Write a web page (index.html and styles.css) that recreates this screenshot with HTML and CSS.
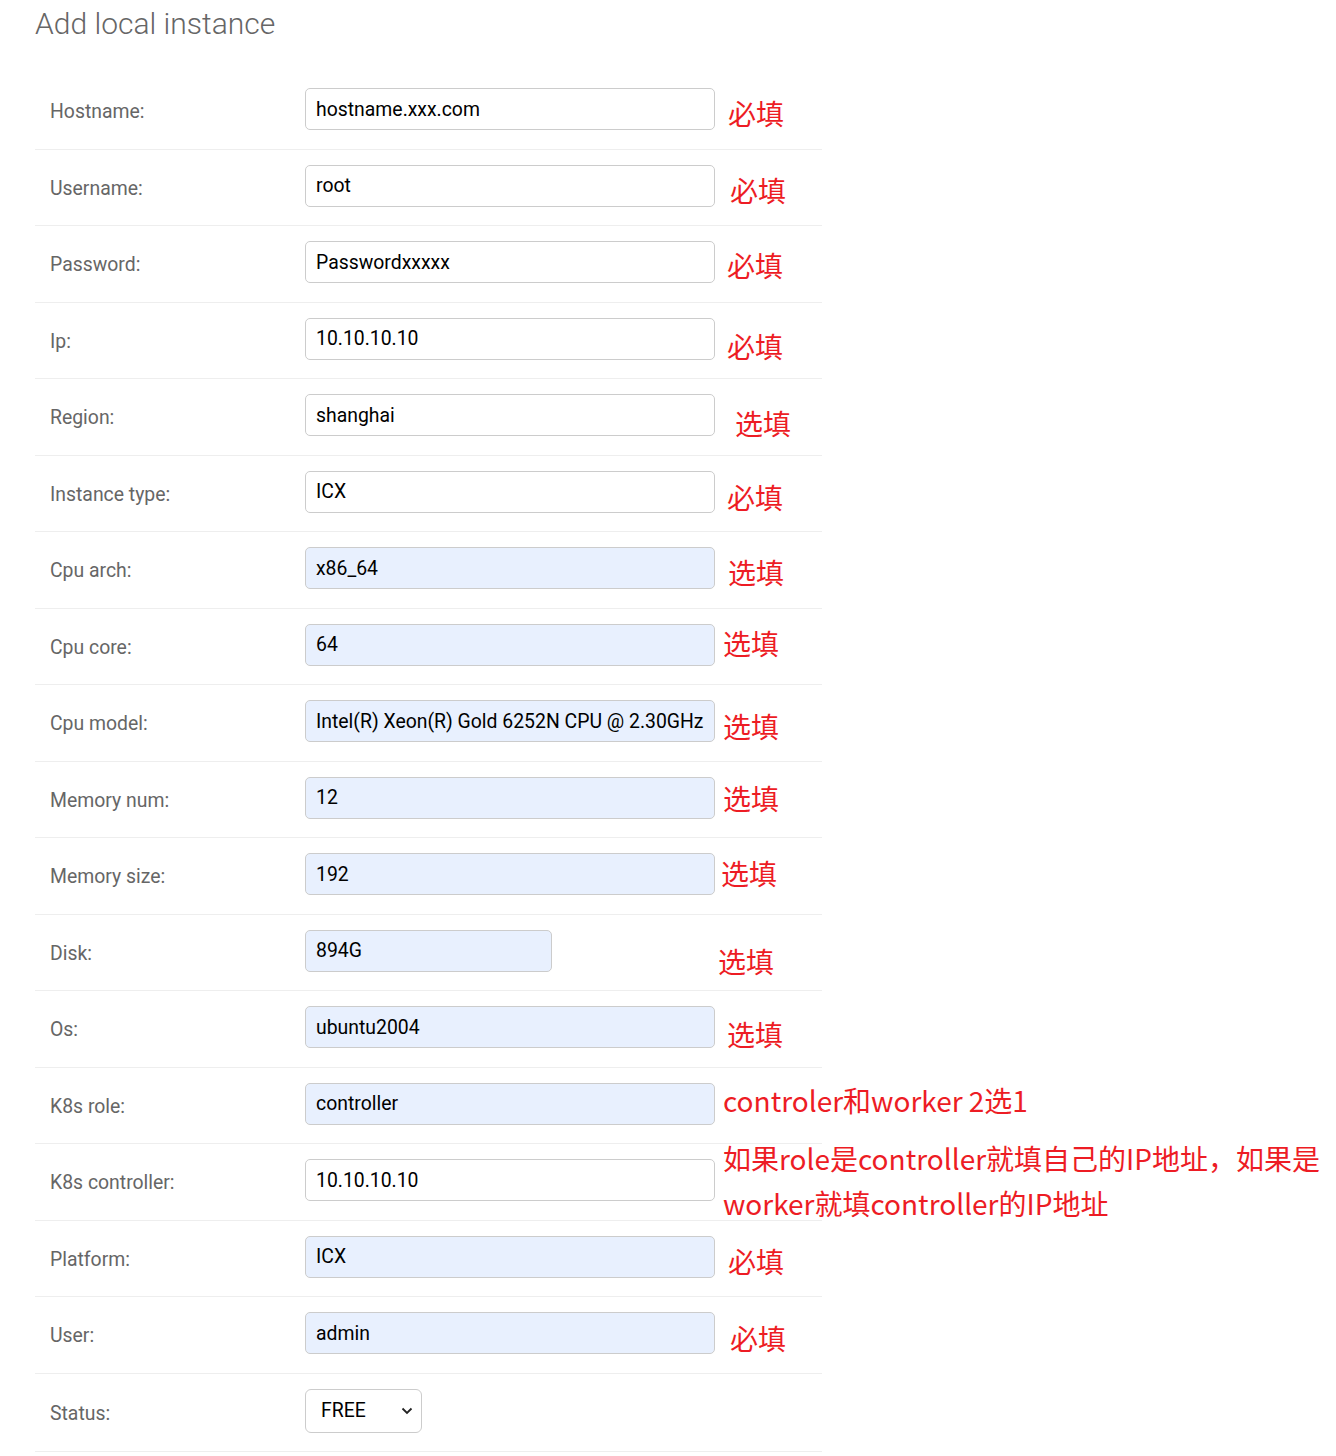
FILE: index.html
```html
<!DOCTYPE html>
<html lang="en">
<head>
<meta charset="utf-8">
<title>Add local instance</title>
<link rel="stylesheet" href="styles.css">
</head>
<body>
<div class="page">
  <h1 class="title">Add local instance</h1>
  <div class="form">
    <div class="row"><label class="label">Hostname:</label><div class="field"><input class="input" type="text" value="hostname.xxx.com"></div><span class="note">必填</span></div>
    <div class="row"><label class="label">Username:</label><div class="field"><input class="input" type="text" value="root"></div><span class="note">必填</span></div>
    <div class="row"><label class="label">Password:</label><div class="field"><input class="input" type="text" value="Passwordxxxxx"></div><span class="note">必填</span></div>
    <div class="row"><label class="label">Ip:</label><div class="field"><input class="input" type="text" value="10.10.10.10"></div><span class="note">必填</span></div>
    <div class="row"><label class="label">Region:</label><div class="field"><input class="input" type="text" value="shanghai"></div><span class="note">选填</span></div>
    <div class="row"><label class="label">Instance type:</label><div class="field"><input class="input" type="text" value="ICX"></div><span class="note">必填</span></div>
    <div class="row"><label class="label">Cpu arch:</label><div class="field"><input class="input filled" type="text" value="x86_64"></div><span class="note">选填</span></div>
    <div class="row"><label class="label">Cpu core:</label><div class="field"><input class="input filled" type="text" value="64"></div><span class="note">选填</span></div>
    <div class="row"><label class="label">Cpu model:</label><div class="field"><input class="input filled" type="text" value="Intel(R) Xeon(R) Gold 6252N CPU @ 2.30GHz"></div><span class="note">选填</span></div>
    <div class="row"><label class="label">Memory num:</label><div class="field"><input class="input filled" type="text" value="12"></div><span class="note">选填</span></div>
    <div class="row"><label class="label">Memory size:</label><div class="field"><input class="input filled" type="text" value="192"></div><span class="note">选填</span></div>
    <div class="row"><label class="label">Disk:</label><div class="field"><input class="input filled short" type="text" value="894G"></div><span class="note">选填</span></div>
    <div class="row"><label class="label">Os:</label><div class="field"><input class="input filled" type="text" value="ubuntu2004"></div><span class="note">选填</span></div>
    <div class="row"><label class="label">K8s role:</label><div class="field"><input class="input filled" type="text" value="controller"></div><span class="note">controler和worker 2选1</span></div>
    <div class="row"><label class="label">K8s controller:</label><div class="field"><input class="input" type="text" value="10.10.10.10"></div><span class="note long">如果role是controller就填自己的IP地址，如果是<br>worker就填controller的IP地址</span></div>
    <div class="row"><label class="label">Platform:</label><div class="field"><input class="input filled" type="text" value="ICX"></div><span class="note">必填</span></div>
    <div class="row"><label class="label">User:</label><div class="field"><input class="input filled" type="text" value="admin"></div><span class="note">必填</span></div>
    <div class="row last"><label class="label">Status:</label><div class="field"><div class="select-wrap"><select class="select"><option>FREE</option></select><svg class="chevron" width="12" height="8" viewBox="0 0 12 8"><path d="M1.5 1.5 L6 6 L10.5 1.5" fill="none" stroke="#222" stroke-width="1.8"/></svg></div></div></div>
  </div>
</div>
</body>
</html>
```
FILE: styles.css
```css
html, body {
  margin: 0;
  padding: 0;
  background: #fff;
}
.page {
  padding: 5px 0 0 35px;
  font-family: Roboto, "Liberation Sans", sans-serif;
}
.title {
  margin: 0;
  font-size: 30px;
  font-weight: 300;
  color: #666;
  line-height: 37px;
}
.form {
  width: 787px;
  margin-top: 31px;
}
.row {
  display: flex;
  align-items: center;
  padding: 15px 0 18.5px 15px;
  border-bottom: 1px solid #eee;
}
.label {
  flex: 0 0 255px;
  font-size: 19.4px;
  color: #666;
  margin-top: 5px;
}
.field {
  flex: 0 0 410px;
  display: flex;
}
.input {
  box-sizing: border-box;
  width: 410px;
  height: 42px;
  border: 1px solid #ccc;
  border-radius: 5px;
  padding: 0 8px 0 10px;
  font-family: Roboto, "Liberation Sans", sans-serif;
  font-size: 19.4px;
  color: #000;
  background: #fff;
  margin: 0;
}
.input.filled {
  background: #e8f0fe;
}
.input.short {
  width: 247px;
}
.select-wrap {
  position: relative;
  width: 117px;
  height: 44px;
}
.select {
  appearance: none;
  -webkit-appearance: none;
  box-sizing: border-box;
  width: 117px;
  height: 44px;
  border: 1px solid #ccc;
  border-radius: 6px;
  background: #fff;
  padding: 0 0 0 15px;
  font-family: Roboto, "Liberation Sans", sans-serif;
  font-size: 19.4px;
  color: #000;
  margin: 0;
}
.chevron {
  position: absolute;
  right: 9px;
  top: 18px;
  pointer-events: none;
}
.note {
  flex: 0 0 auto;
  white-space: nowrap;
  font-family: "Noto Sans CJK SC", "Noto Sans", sans-serif;
  font-size: 28px;
  line-height: 30px;
  color: #ed1c24;
  margin-left: var(--dx, 12px);
  transform: translateY(var(--dy, 4px));
}
.note.long {
  height: 42px;
  line-height: 45px;
}
.row:nth-child(1) .note { --dx: 13px; --dy: 4px; }
.row:nth-child(2) .note { --dx: 15px; --dy: 4px; }
.row:nth-child(3) .note { --dx: 12px; --dy: 3px; }
.row:nth-child(4) .note { --dx: 12px; --dy: 7px; }
.row:nth-child(5) .note { --dx: 20px; --dy: 8px; }
.row:nth-child(6) .note { --dx: 12px; --dy: 5px; }
.row:nth-child(7) .note { --dx: 13px; --dy: 4px; }
.row:nth-child(8) .note { --dx: 8px; --dy: -2px; }
.row:nth-child(9) .note { --dx: 8px; --dy: 5px; }
.row:nth-child(10) .note { --dx: 8px; --dy: 0px; }
.row:nth-child(11) .note { --dx: 6px; --dy: -1px; }
.row:nth-child(12) .note { --dx: 3px; --dy: 10px; }
.row:nth-child(13) .note { --dx: 12px; --dy: 7px; }
.row:nth-child(14) .note { --dx: 8px; --dy: -4px; }
.row:nth-child(15) .note { --dx: 8px; --dy: -23.5px; }
.row:nth-child(16) .note { --dx: 13px; --dy: 4px; }
.row:nth-child(17) .note { --dx: 15px; --dy: 5px; }
.row.last {
  padding-bottom: 18px;
}
```
